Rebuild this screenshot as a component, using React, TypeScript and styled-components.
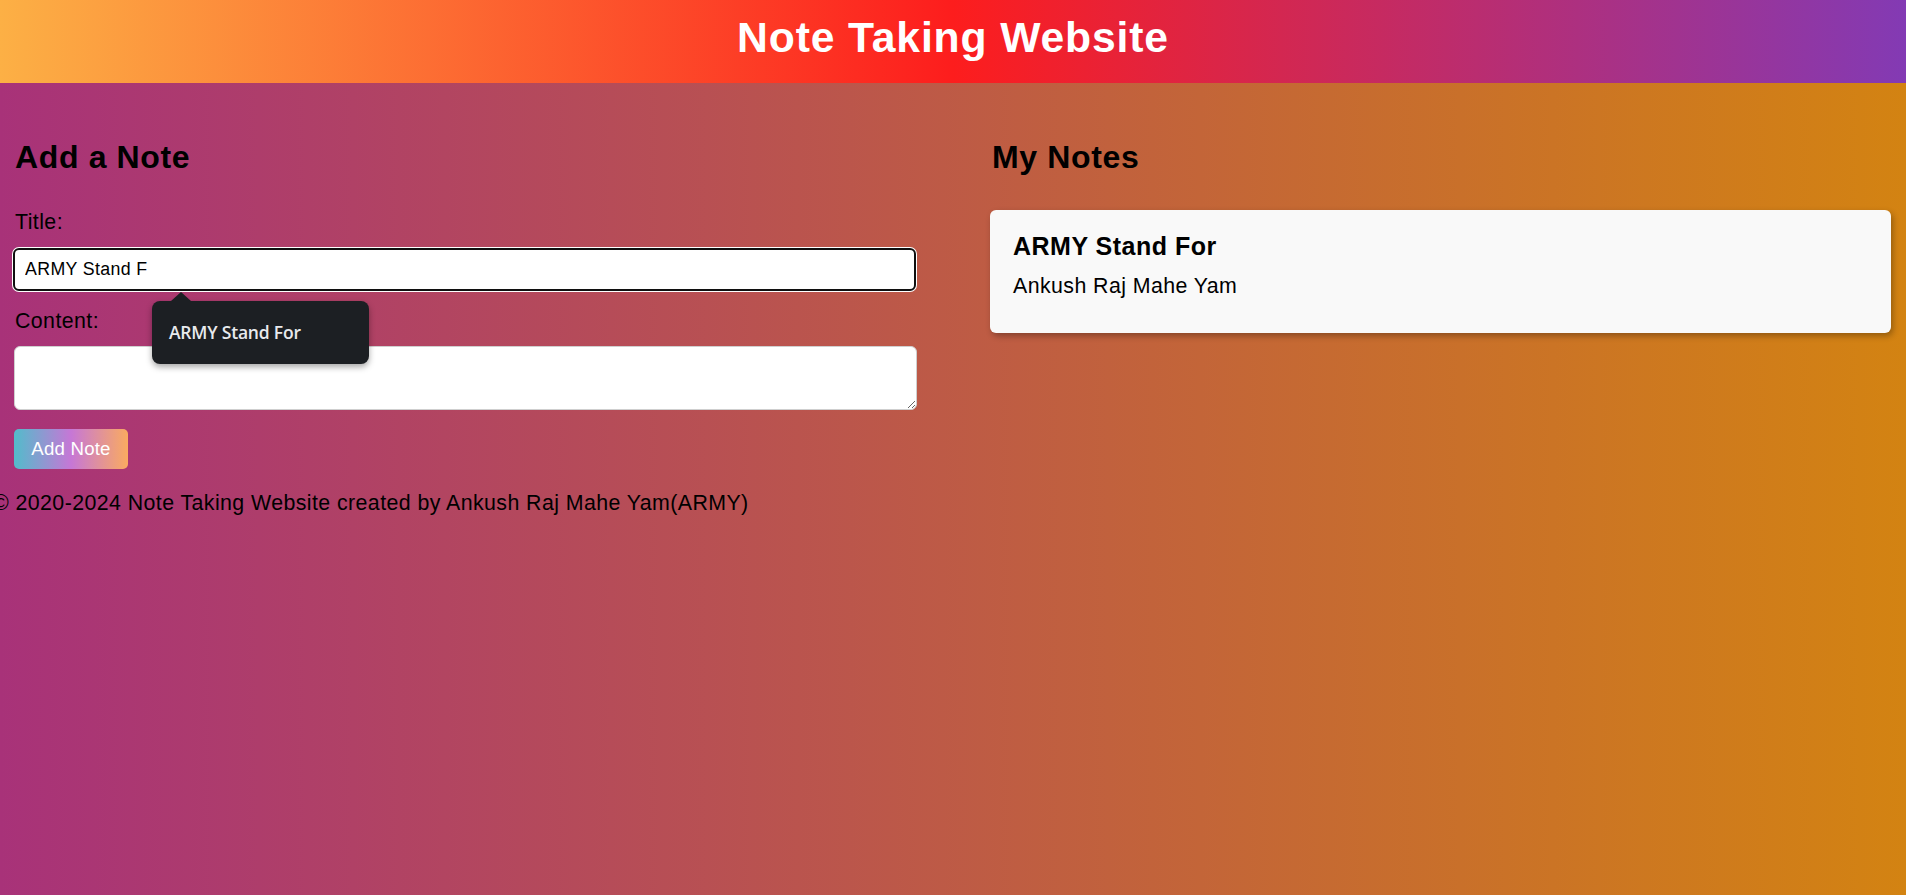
import React from "react";
import styled, { createGlobalStyle } from "styled-components";

const GlobalStyle = createGlobalStyle`
  html, body {
    margin: 0;
    padding: 0;
  }
  body {
    font-family: "Liberation Sans", Arial, sans-serif;
    color: #000;
  }
`;

const Page = styled.div`
  min-height: 100vh;
  background: linear-gradient(to right, #a83279, #d38312);
  overflow: hidden;
`;

const Header = styled.header`
  background: linear-gradient(to right, #fcb045, #fd1d1d, #833ab4);
  padding: 13px 0 21px;
  text-align: center;
`;

const SiteTitle = styled.h1`
  margin: 0;
  font-size: 42.67px;
  font-weight: 700;
  line-height: 49px;
  letter-spacing: 0.02em;
  color: #fff;
`;

const Main = styled.main`
  display: flex;
  justify-content: space-between;
  padding: 0 15px 0 13px;
`;

const Column = styled.section<{ $width: number }>`
  width: ${(p) => p.$width}px;
  display: flex;
  flex-direction: column;
  align-items: flex-start;
`;

const SectionTitle = styled.h2`
  margin: 56px 0 34px;
  font-size: 32px;
  font-weight: 700;
  line-height: 37px;
  letter-spacing: 0.02em;
  padding-left: 2px;
`;

const Label = styled.label<{ $gap: number }>`
  display: block;
  font-size: 21.33px;
  line-height: 24.5px;
  letter-spacing: 0.02em;
  margin-bottom: ${(p) => p.$gap}px;
  padding-left: 2px;
`;

const FieldWrap = styled.div`
  position: relative;
  width: 100%;
  margin-bottom: 18px;
`;

const TextInput = styled.input`
  box-sizing: border-box;
  display: block;
  width: 100%;
  height: 43px;
  padding: 0 10px;
  border: 2px solid #101010;
  border-radius: 6px;
  box-shadow: 0 0 0 1px #ffffff;
  outline: none;
  background: #fff;
  font-family: "Liberation Sans", Arial, sans-serif;
  font-size: 17.78px;
  letter-spacing: 0.02em;
  color: #000;
  caret-color: #000;
`;

const Suggestion = styled.div`
  position: absolute;
  left: 139px;
  top: 53px;
  width: 217px;
  height: 63px;
  box-sizing: border-box;
  padding: 0 17px;
  display: flex;
  align-items: center;
  background: #1c1f23;
  border-radius: 8px;
  box-shadow: 0 3px 6px rgba(0, 0, 0, 0.35);
  color: #e8eaed;
  font-family: "Open Sans", "Noto Sans", sans-serif;
  font-weight: 600;
  font-size: 17.5px;
  letter-spacing: -0.2px;
  z-index: 5;

  &::before {
    content: "";
    position: absolute;
    left: 19px;
    top: -9px;
    border-left: 10px solid transparent;
    border-right: 10px solid transparent;
    border-bottom: 9px solid #1c1f23;
  }
`;

const TextArea = styled.textarea`
  box-sizing: border-box;
  display: block;
  width: 100%;
  height: 64px;
  margin: 0 0 19px 1px;
  padding: 10px;
  border: 1px solid #cfcfcf;
  border-radius: 6px;
  background: #fff;
  font-family: "Liberation Sans", Arial, sans-serif;
  font-size: 17.78px;
`;

const AddButton = styled.button`
  box-sizing: border-box;
  width: 114px;
  height: 40px;
  margin-left: 1px;
  padding: 0;
  border: none;
  border-radius: 5px;
  background: linear-gradient(to right, #52bccb, #c677d6, #faab60);
  color: #fff;
  font-family: "Liberation Sans", Arial, sans-serif;
  font-size: 18.67px;
  letter-spacing: 0.01em;
  cursor: pointer;
`;

const NoteCard = styled.article`
  box-sizing: border-box;
  width: 100%;
  padding: 22px 23px 35px;
  background: #f9f9f9;
  border-radius: 6px;
  box-shadow: 2px 3px 6px rgba(0, 0, 0, 0.3);
`;

const NoteTitle = styled.h3`
  margin: 0 0 13px;
  font-size: 25px;
  font-weight: 700;
  line-height: 28.7px;
  letter-spacing: 0.02em;
`;

const NoteBody = styled.p`
  margin: 0;
  font-size: 21.33px;
  line-height: 24.5px;
  letter-spacing: 0.02em;
`;

const Footer = styled.footer`
  margin: 22px 0 0 -7px;
  font-size: 21.33px;
  line-height: 24.5px;
  letter-spacing: 0.02em;
  white-space: nowrap;
`;

export default function App() {
  return (
    <Page>
      <GlobalStyle />
      <Header>
        <SiteTitle>Note Taking Website</SiteTitle>
      </Header>
      <Main>
        <Column $width={903}>
          <SectionTitle>Add a Note</SectionTitle>
          <Label $gap={13} htmlFor="title">Title:</Label>
          <FieldWrap>
            <TextInput id="title" type="text" defaultValue="ARMY Stand F" />
            <Suggestion>ARMY Stand For</Suggestion>
          </FieldWrap>
          <Label $gap={13} htmlFor="content">Content:</Label>
          <TextArea id="content" />
          <AddButton type="button">Add Note</AddButton>
        </Column>
        <Column $width={901}>
          <SectionTitle>My Notes</SectionTitle>
          <NoteCard>
            <NoteTitle>ARMY Stand For</NoteTitle>
            <NoteBody>Ankush Raj Mahe Yam</NoteBody>
          </NoteCard>
        </Column>
      </Main>
      <Footer>© 2020-2024 Note Taking Website created by Ankush Raj Mahe Yam(ARMY)</Footer>
    </Page>
  );
}
